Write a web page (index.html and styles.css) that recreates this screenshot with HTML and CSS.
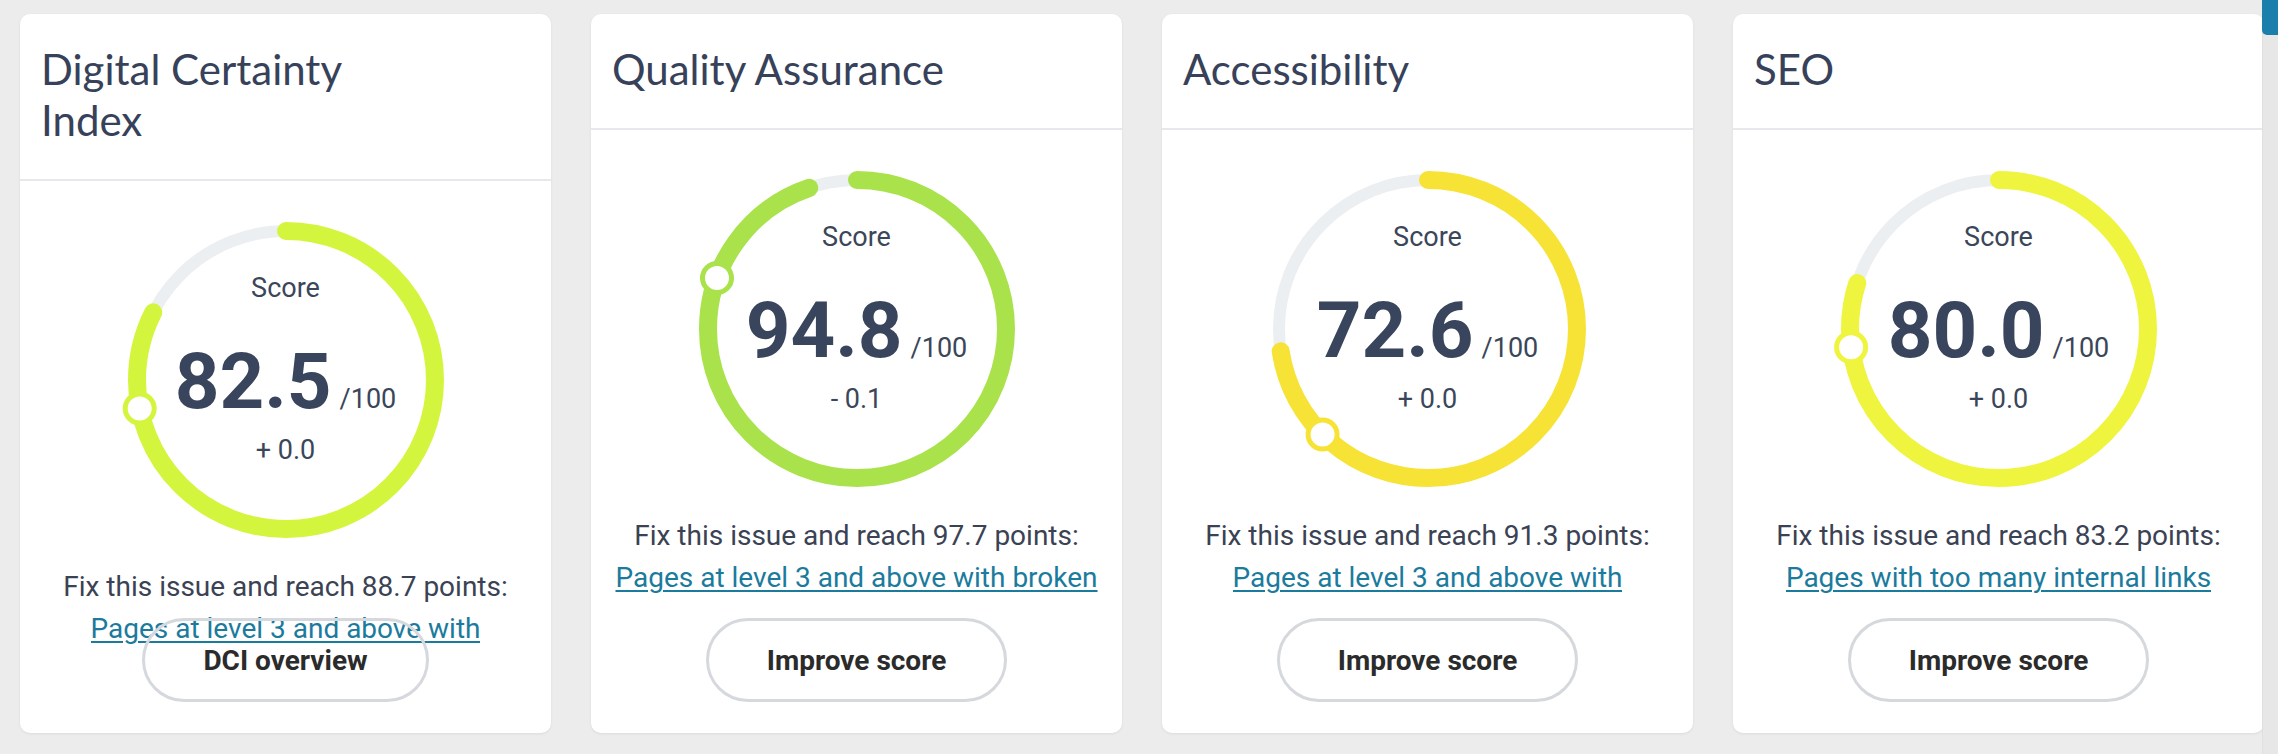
FILE: index.html
```html
<!DOCTYPE html>
<html lang="en">
<head>
<meta charset="utf-8">
<title>Scores</title>
<link rel="stylesheet" href="styles.css">
</head>
<body>
<div class="page">
  <main class="cards">
    <section class="card">
      <header class="card-head"><h2 class="card-title">Digital Certainty<br>Index</h2></header>
      <div class="card-body">
        <div class="gauge">
          <svg class="ring" viewBox="0 0 316 316" width="316" height="316">
            <circle class="track" cx="158" cy="158" r="149"/>
            <circle class="arc arc-dci" cx="158" cy="158" r="149" pathLength="100" stroke-dasharray="82.5 100" transform="rotate(-90 158 158)"/>
            <circle class="knob knob-dci" cx="11.7" cy="186.4" r="14.5"/>
          </svg>
          <div class="readout">
            <div class="label">Score</div>
            <div class="value"><span class="num">82.5</span><span class="max">/100</span></div>
            <div class="delta">+ 0.0</div>
          </div>
        </div>
        <p class="fix">Fix this issue and reach 88.7 points:</p>
        <a class="issue" href="#">Pages at level 3 and above with</a>
      </div>
      <footer class="card-foot"><button class="btn">DCI overview</button></footer>
    </section>

    <section class="card">
      <header class="card-head"><h2 class="card-title">Quality Assurance</h2></header>
      <div class="card-body">
        <div class="gauge">
          <svg class="ring" viewBox="0 0 316 316" width="316" height="316">
            <circle class="track" cx="158" cy="158" r="149"/>
            <circle class="arc arc-qa" cx="158" cy="158" r="149" pathLength="100" stroke-dasharray="94.8 100" transform="rotate(-90 158 158)"/>
            <circle class="knob knob-qa" cx="18" cy="107" r="14.5"/>
          </svg>
          <div class="readout">
            <div class="label">Score</div>
            <div class="value"><span class="num">94.8</span><span class="max">/100</span></div>
            <div class="delta">- 0.1</div>
          </div>
        </div>
        <p class="fix">Fix this issue and reach 97.7 points:</p>
        <a class="issue" href="#">Pages at level 3 and above with broken</a>
      </div>
      <footer class="card-foot"><button class="btn">Improve score</button></footer>
    </section>

    <section class="card">
      <header class="card-head"><h2 class="card-title">Accessibility</h2></header>
      <div class="card-body">
        <div class="gauge">
          <svg class="ring" viewBox="0 0 316 316" width="316" height="316">
            <circle class="track" cx="158" cy="158" r="149"/>
            <circle class="arc arc-acc" cx="158" cy="158" r="149" pathLength="100" stroke-dasharray="72.6 100" transform="rotate(-90 158 158)"/>
            <circle class="knob knob-acc" cx="52.6" cy="263.4" r="14.5"/>
          </svg>
          <div class="readout">
            <div class="label">Score</div>
            <div class="value"><span class="num">72.6</span><span class="max">/100</span></div>
            <div class="delta">+ 0.0</div>
          </div>
        </div>
        <p class="fix">Fix this issue and reach 91.3 points:</p>
        <a class="issue" href="#">Pages at level 3 and above with</a>
      </div>
      <footer class="card-foot"><button class="btn">Improve score</button></footer>
    </section>

    <section class="card">
      <header class="card-head"><h2 class="card-title">SEO</h2></header>
      <div class="card-body">
        <div class="gauge">
          <svg class="ring" viewBox="0 0 316 316" width="316" height="316">
            <circle class="track" cx="158" cy="158" r="149"/>
            <circle class="arc arc-seo" cx="158" cy="158" r="149" pathLength="100" stroke-dasharray="80 100" transform="rotate(-90 158 158)"/>
            <circle class="knob knob-seo" cx="10.1" cy="176.2" r="14.5"/>
          </svg>
          <div class="readout">
            <div class="label">Score</div>
            <div class="value"><span class="num">80.0</span><span class="max">/100</span></div>
            <div class="delta">+ 0.0</div>
          </div>
        </div>
        <p class="fix">Fix this issue and reach 83.2 points:</p>
        <a class="issue" href="#">Pages with too many internal links</a>
      </div>
      <footer class="card-foot"><button class="btn">Improve score</button></footer>
    </section>
  </main>
  <aside class="scrollbar"><div class="thumb"></div></aside>
</div>
</body>
</html>
```

FILE: styles.css
```css
* { box-sizing: border-box; }

html, body {
  margin: 0;
  padding: 0;
  background: #ececec;
  font-family: Roboto, "Liberation Sans", sans-serif;
}

.page {
  display: flex;
  width: 2278px;
  height: 754px;
  overflow: hidden;
}

.cards {
  flex: 1;
  display: grid;
  grid-template-columns: repeat(4, 1fr);
  column-gap: 40px;
  padding: 14px 0 0 20px;
  margin-right: -2px;
  align-items: start;
}

.scrollbar {
  width: 16px;
  flex: none;
  background: #e7e7e7;
  border-left: 1px solid #e0e0e0;
  position: relative;
  z-index: 1;
}

.thumb {
  height: 35px;
  background: #1a7fab;
  border-bottom-left-radius: 5px;
  margin-left: -1px;
}

.card {
  height: 719px;
  background: #fff;
  border-radius: 10px;
  box-shadow: 0 1px 3px rgba(0, 0, 0, 0.07);
  display: flex;
  flex-direction: column;
}

.card-head {
  flex: none;
  padding: 30px 21px 33px;
  border-bottom: 2px solid #e6e8eb;
}

.card-title {
  margin: 0;
  font-family: Lato, "Open Sans", sans-serif;
  font-weight: 400;
  font-size: 42px;
  line-height: 51px;
  color: #37425a;
}

.card-body {
  flex: 1 1 0;
  min-height: 0;
  padding: 41px 20px 0;
  display: flex;
  flex-direction: column;
  align-items: center;
}

.card-body > * {
  flex: none;
}

.gauge {
  display: grid;
  width: 316px;
  height: 316px;
}

.gauge > * {
  grid-area: 1 / 1;
}

.ring {
  overflow: visible;
}

.track {
  fill: none;
  stroke: #eceff1;
  stroke-width: 12;
}

.arc {
  fill: none;
  stroke-width: 18;
  stroke-linecap: round;
}

.knob {
  fill: #fff;
  stroke-width: 5;
}

.arc-dci { stroke: #d4f53d; }
.knob-dci { stroke: #d4f53d; }
.arc-qa { stroke: #a9e24b; }
.knob-qa { stroke: #a9e24b; }
.arc-acc { stroke: #f6e335; }
.knob-acc { stroke: #f6e335; }
.arc-seo { stroke: #eff43e; }
.knob-seo { stroke: #eff43e; }

.readout {
  align-self: start;
  padding-top: 48px;
  display: flex;
  flex-direction: column;
  align-items: center;
  color: #39465e;
}

.label {
  font-size: 27px;
  line-height: 36px;
  color: #3b4659;
}

.value {
  margin-top: 31px;
  font-size: 78px;
  line-height: 90px;
  white-space: nowrap;
}

.num {
  font-weight: 700;
  color: #38455d;
}

.max {
  font-size: 27px;
  margin-left: 8px;
  color: #3b4659;
}

.delta {
  margin-top: -12px;
  font-size: 27px;
  line-height: 36px;
  color: #3b4659;
}

.fix {
  margin: 28px 0 0;
  font-size: 28px;
  line-height: 42px;
  color: #3a4254;
  white-space: nowrap;
  text-align: center;
}

.issue {
  display: block;
  max-width: 100%;
  height: 42px;
  font-size: 28px;
  line-height: 42px;
  color: #1b7b9d;
  text-decoration: underline;
  text-decoration-thickness: 2px;
  text-underline-offset: 3px;
  white-space: nowrap;
  overflow: hidden;
  text-align: center;
}

.card-foot {
  flex: none;
  display: flex;
  justify-content: center;
  padding: 0 0 31px;
}

.btn {
  height: 84px;
  padding: 0 58px;
  border: 3px solid #d5d9dd;
  border-radius: 42px;
  background: transparent;
  font-family: Roboto, "Liberation Sans", sans-serif;
  font-weight: 700;
  font-size: 28px;
  color: #2b2b2b;
  cursor: pointer;
}
```
